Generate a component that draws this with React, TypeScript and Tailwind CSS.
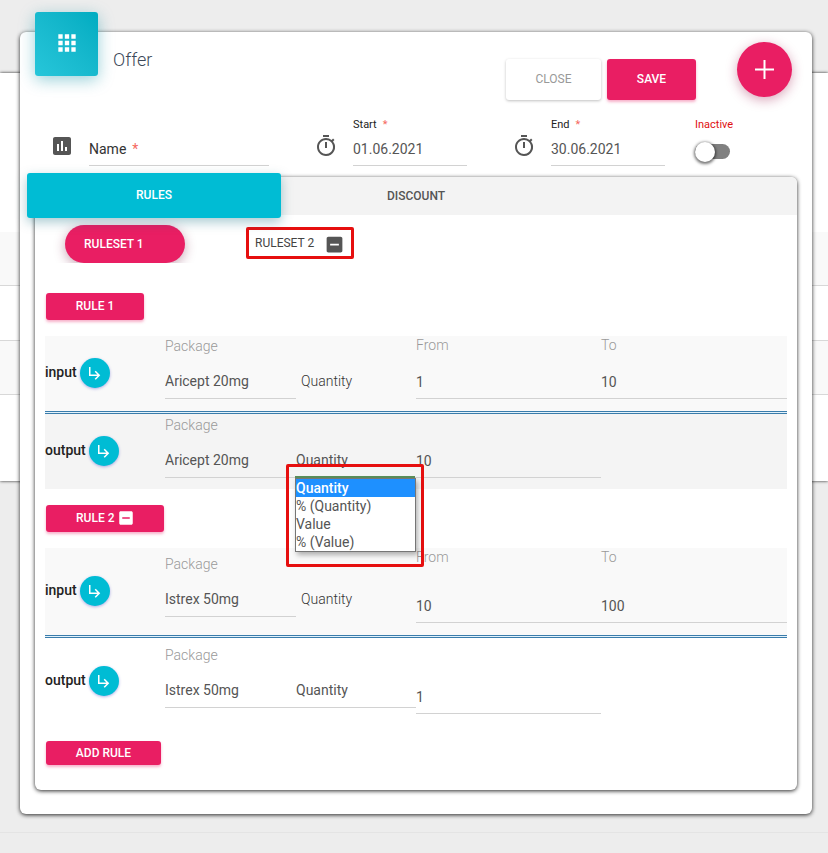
import { useState } from "react";
import {
  MdApps,
  MdIndeterminateCheckBox,
  MdInsertChart,
  MdOutlineTimer,
  MdSubdirectoryArrowRight,
} from "react-icons/md";

const UNITS = ["Quantity", "% (Quantity)", "Value", "% (Value)"];

const pinkButton =
  "block rounded-[3px] bg-[#e91e63] text-xs font-medium text-white shadow-[0_2px_3px_rgba(233,30,99,0.35)]";

function Required() {
  return <span className="ml-1.5 text-[#f44336] opacity-80">*</span>;
}

function DateField({ id, label, value }: { id: string; label: string; value: string }) {
  return (
    <div className="flex gap-[15px]">
      <MdOutlineTimer className="mt-[18px] size-6 shrink-0 text-[#555]" aria-hidden />
      <div className="min-w-0 flex-1">
        <label htmlFor={id} className="block h-[18px] text-[11px] leading-[18px] text-[#222]">
          {label}
          <Required />
        </label>
        <input
          id={id}
          defaultValue={value}
          className="mt-[5px] block h-[27px] w-full border-b border-[#d2d2d2] pb-1.5 text-sm leading-5 text-[#555] outline-none"
        />
      </div>
    </div>
  );
}

function PackageField({ id, value }: { id: string; value: string }) {
  return (
    <div>
      <label htmlFor={id} className="block h-5 text-sm leading-5 font-light text-[#999]">
        Package
      </label>
      <input
        id={id}
        defaultValue={value}
        className="mt-[15px] block h-7 w-full border-b border-[#d2d2d2] pb-[7px] text-sm leading-5 text-[#555] outline-none"
      />
    </div>
  );
}

function AmountField({ id, label, value }: { id: string; label?: string; value: string }) {
  return (
    <div className="flex flex-col justify-between self-stretch">
      <label htmlFor={id} className="block h-[18px] text-sm leading-[18px] font-light text-[#999]">
        {label}
      </label>
      <input
        id={id}
        aria-label={label ?? "Amount"}
        defaultValue={value}
        className="block h-[27px] w-full border-b border-[#d2d2d2] pb-1.5 text-sm leading-5 text-[#555] outline-none"
      />
    </div>
  );
}

function UnitMenu() {
  return (
    <div className="absolute top-[49px] -left-2.5 z-10 w-[138px] rounded-[2px] border-3 border-[#e60f0f] px-1.5 pt-[9px] pb-3">
      <div className="h-0.5 bg-[#5b8f5b]" />
      <ul
        role="listbox"
        aria-label="Unit"
        className="-mr-px border border-[#767676] bg-white text-sm leading-[18px] text-[#555] shadow-[2px_3px_5px_rgba(0,0,0,0.3)]"
      >
        {UNITS.map((unit, i) => (
          <li
            key={unit}
            role="option"
            aria-selected={i === 0}
            className={i === 0 ? "bg-[#1e90ff] font-medium text-white" : ""}
          >
            {unit}
          </li>
        ))}
      </ul>
    </div>
  );
}

function UnitField({ id, output, open }: { id: string; output?: boolean; open?: boolean }) {
  return (
    <div className="relative pt-[35px]">
      <select
        id={id}
        aria-label="Unit"
        className={
          output
            ? "block h-7 w-full appearance-none border-b border-[#d2d2d2] pb-[7px] text-sm leading-5 text-[#555] outline-none"
            : "block h-7 w-full appearance-none pb-2 pl-[5px] text-sm leading-5 font-light text-[#333] outline-none"
        }
      >
        {UNITS.map((unit) => (
          <option key={unit}>{unit}</option>
        ))}
      </select>
      {open && <UnitMenu />}
    </div>
  );
}

type RowProps = {
  id: string;
  kind: "input" | "output";
  pack: string;
  from: string;
  to?: string;
  open?: boolean;
  className: string;
};

function RuleRow({ id, kind, pack, from, to, open, className }: RowProps) {
  const output = kind === "output";
  return (
    <div className={`flex ${className}`}>
      <div className="flex w-[120px] shrink-0 items-center gap-[3px] pb-px">
        <span className="pb-0.5 text-sm font-medium text-[#222]">{kind}</span>
        <button
          type="button"
          aria-label={`Edit ${kind}`}
          className="flex size-[30px] items-center justify-center rounded-full bg-[#00bcd4] text-white shadow-[0_1px_3px_rgba(60,60,200,0.4)]"
        >
          <MdSubdirectoryArrowRight className="size-[18px]" />
        </button>
      </div>
      <div
        className={`grid flex-1 grid-cols-[131fr_120fr_185fr_186fr] items-center ${
          output ? "pt-px pb-[11px]" : "pb-3"
        }`}
      >
        <PackageField id={`${id}-package`} value={pack} />
        <UnitField id={`${id}-unit`} output={output} open={open} />
        <AmountField id={`${id}-from`} label={output ? undefined : "From"} value={from} />
        {to && <AmountField id={`${id}-to`} label="To" value={to} />}
      </div>
    </div>
  );
}

function RowDivider() {
  return <div className="h-[3px] border-y border-[#3a7cab] bg-[#e3f2fb]" />;
}

function Backdrop() {
  return (
    <div className="flex flex-col [grid-area:1/1]" aria-hidden>
      <div className="mt-[73px] bg-white pt-[159px] pb-[86px] shadow-[0_0_3px_rgba(0,0,0,0.85)]">
        <div className="h-[54px] border-b border-[#d8d8d8] bg-[#f9f9f9]" />
        <div className="h-[55px] border-b border-[#d8d8d8]" />
        <div className="h-[54px] border-b border-[#d8d8d8] bg-[#f9f9f9]" />
      </div>
      <div className="mt-auto h-[21px] border-t border-[#e4e4e4]" />
    </div>
  );
}

export default function App() {
  const [active, setActive] = useState(false);
  return (
    <div className="grid min-h-screen grid-cols-1 bg-[#ededed] font-['Roboto',sans-serif]">
      <Backdrop />
      <main className="mt-8 mr-4 mb-[38px] ml-5 self-start rounded-md bg-white px-[15px] pb-6 shadow-[0_1px_4px_rgba(0,0,0,0.85)] [grid-area:1/1]">
        <header className="flex h-[68px] items-start">
          <div className="-mt-5 flex h-16 w-[63px] items-center justify-center rounded-[3px] bg-linear-to-tr from-[#26c6da] to-[#00acc1] text-white shadow-[0_4px_16px_rgba(0,140,160,0.4)]">
            <MdApps className="mb-0.5 size-[26px]" />
          </div>
          <h1 className="mt-4 ml-[15px] text-lg leading-6 font-light text-[#3c4858]">Offer</h1>
          <button
            type="button"
            className="mt-[27px] ml-auto h-[41px] w-[95px] rounded-[3px] bg-white pb-0.5 text-xs text-[#999] shadow-[0_1px_3px_rgba(0,0,0,0.25)]"
          >
            CLOSE
          </button>
          <button type="button" className={`mt-[27px] ml-1.5 h-[41px] w-[89px] pb-0.5 ${pinkButton}`}>
            SAVE
          </button>
          <button
            type="button"
            aria-label="Add"
            className="mt-2.5 mr-[5px] ml-[41px] flex size-[55px] items-center justify-center rounded-full bg-[#e91e63] text-white shadow-[0_3px_12px_rgba(160,30,80,0.4)]"
          >
            <svg viewBox="0 0 19 19" className="size-[19px]" fill="currentColor" aria-hidden>
              <path d="M8.5 0h2v8.5H19v2h-8.5V19h-2v-8.5H0v-2h8.5z" />
            </svg>
          </button>
        </header>

        <div className="mt-4 grid grid-cols-[234fr_168fr_153fr_102fr] gap-x-[30px] pl-[15px]">
          <div className="flex gap-[15px] pr-[15px]">
            <MdInsertChart className="mt-[18px] size-6 shrink-0 text-[#555]" aria-hidden />
            <div className="mt-[23px] flex h-[27px] flex-1 border-b border-[#d2d2d2]">
              <label htmlFor="name" className="text-sm leading-5 text-[#333]">
                Name
                <Required />
              </label>
              <input id="name" className="h-5 w-0 min-w-0 flex-1 pl-2 text-sm outline-none" />
            </div>
          </div>
          <div className="pr-[15px]">
            <DateField id="start" label="Start" value="01.06.2021" />
          </div>
          <DateField id="end" label="End" value="30.06.2021" />
          <div>
            <label htmlFor="active" className="block text-[11px] leading-[18px] text-[#e01010]">
              Inactive
            </label>
            <input
              id="active"
              type="checkbox"
              role="switch"
              checked={active}
              onChange={() => setActive(!active)}
              className="mt-2.5 flex h-[15px] w-[35px] appearance-none items-center rounded-full bg-[#808080] before:block before:size-5 before:shrink-0 before:rounded-full before:bg-white before:shadow-[0_1px_3px_1px_rgba(0,0,0,0.55)] checked:justify-end checked:bg-[#00bcd4]"
            />
          </div>
        </div>

        <section className="mt-[11px] rounded-md pb-[25px] shadow-[0_1px_4px_rgba(0,0,0,0.85)]">
          <div role="tablist" className="grid h-[38px] grid-cols-3 rounded-t-md bg-[#f3f3f3]">
            <button
              type="button"
              role="tab"
              aria-selected
              className="z-10 -mt-1 mr-2 -mb-[3px] -ml-2 rounded-[3px] bg-[#00bcd4] pb-0.5 text-xs font-medium text-white shadow-[0_4px_12px_rgba(0,100,120,0.35)]"
            >
              RULES
            </button>
            <button type="button" role="tab" aria-selected={false} className="text-xs font-medium text-[#555]">
              DISCOUNT
            </button>
          </div>

          <div className="flex h-12 items-start overflow-hidden pt-2.5 pl-[30px]">
            <button
              type="button"
              className="h-[38px] w-[120px] rounded-full bg-[#e91e63] pl-[19px] text-left text-xs font-medium text-white shadow-[0_3px_12px_rgba(120,30,70,0.4)]"
            >
              RULESET 1
            </button>
            <button
              type="button"
              className="mt-0.5 ml-[61px] flex h-8 w-[108px] items-center gap-2.5 rounded-[2px] border-3 border-[#e60f0f] bg-white pl-1.5 text-xs text-[#444]"
            >
              RULESET 2
              <MdIndeterminateCheckBox className="mt-0.5 size-[21px] shrink-0 text-[#555]" />
            </button>
          </div>

          <div className="px-2.5 pt-[30px]">
            <button type="button" className={`ml-px h-[27px] w-[98px] pb-0.5 ${pinkButton}`}>
              RULE 1
            </button>
            <div className="mt-4">
              <RuleRow
                id="r1-in"
                kind="input"
                pack="Aricept 20mg"
                from="1"
                to="10"
                className="h-[75px] bg-[#f9f9f9]"
              />
              <RowDivider />
              <RuleRow
                id="r1-out"
                kind="output"
                pack="Aricept 20mg"
                from="10"
                open
                className="h-[75px] bg-[#f4f4f4]"
              />
            </div>

            <button type="button" className={`mt-4 ml-px h-[27px] w-[118px] pb-0.5 pl-[30px] ${pinkButton}`}>
              <span className="flex items-center gap-[3px]">
                RULE 2
                <MdIndeterminateCheckBox className="size-[18px] shrink-0" />
              </span>
            </button>
            <div className="mt-4">
              <RuleRow
                id="r2-in"
                kind="input"
                pack="Istrex 50mg"
                from="10"
                to="100"
                className="h-[87px] bg-[#f9f9f9]"
              />
              <RowDivider />
              <RuleRow id="r2-out" kind="output" pack="Istrex 50mg" from="1" className="h-[87px]" />
            </div>

            <button type="button" className={`mt-4 ml-px h-6 w-[115px] ${pinkButton}`}>
              ADD RULE
            </button>
          </div>
        </section>
      </main>
    </div>
  );
}
